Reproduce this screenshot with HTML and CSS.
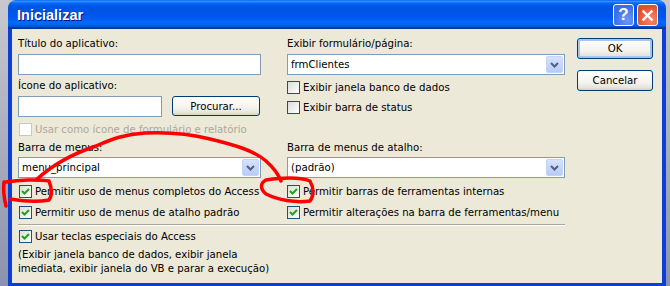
FILE: index.html
```html
<!DOCTYPE html>
<html>
    <head>
        <link rel="stylesheet" href="styles.css">
    </head>
    <body>
        <div class="screen">
            <div class="window">
                <div class="titlebar">
                    <span class="title">Inicializar</span>
                    <span class="tb help">?</span>
                    <span class="tb close">
                        <svg width="13" height="13" viewBox="0 0 13 13"><path d="M2.5 2.5 L10.5 10.5 M10.5 2.5 L2.5 10.5" stroke="#fff" stroke-width="2.4" stroke-linecap="square"/></svg>
                    </span>
                </div>
                <div class="client">
                    <div class="main">
                        <div class="upper">
                            <div class="col col-left">
                                <div class="label">Título do aplicativo:</div>
                                <div class="textbox"></div>
                                <div class="label gap3">Ícone do aplicativo:</div>
                                <div class="icon-row">
                                    <div class="textbox short"></div>
                                    <button class="xp-btn browse">Procurar...</button>
                                </div>
                                <div class="check-row disabled first-check">
                                    <span class="box"></span>Usar como ícone de formulário e relatório
                                </div>
                                <div class="label gap3">Barra de menus:</div>
                                <div class="combo">
                                    <span class="combo-text">menu_principal</span>
                                    <span class="drop"><svg width="9" height="6" viewBox="0 0 9 6"><path d="M1 1 L4.5 4.5 L8 1" fill="none" stroke="#4d6185" stroke-width="2"/></svg></span>
                                </div>
                                <div class="check-row checked">
                                    <span class="box"><svg width="11" height="11" viewBox="0 0 11 11"><path d="M2 5 L4.5 7.5 L9 3" fill="none" stroke="#21a121" stroke-width="2"/></svg></span>Permitir uso de menus completos do Access
                                </div>
                                <div class="check-row checked">
                                    <span class="box"><svg width="11" height="11" viewBox="0 0 11 11"><path d="M2 5 L4.5 7.5 L9 3" fill="none" stroke="#21a121" stroke-width="2"/></svg></span>Permitir uso de menus de atalho padrão
                                </div>
                            </div>
                            <div class="col col-right">
                                <div class="label">Exibir formulário/página:</div>
                                <div class="combo first-combo">
                                    <span class="combo-text">frmClientes</span>
                                    <span class="drop"><svg width="9" height="6" viewBox="0 0 9 6"><path d="M1 1 L4.5 4.5 L8 1" fill="none" stroke="#4d6185" stroke-width="2"/></svg></span>
                                </div>
                                <div class="check-row near">
                                    <span class="box"></span>Exibir janela banco de dados
                                </div>
                                <div class="check-row near">
                                    <span class="box"></span>Exibir barra de status
                                </div>
                                <div class="label spacer">Barra de menus de atalho:</div>
                                <div class="combo">
                                    <span class="combo-text">(padrão)</span>
                                    <span class="drop"><svg width="9" height="6" viewBox="0 0 9 6"><path d="M1 1 L4.5 4.5 L8 1" fill="none" stroke="#4d6185" stroke-width="2"/></svg></span>
                                </div>
                                <div class="check-row checked">
                                    <span class="box"><svg width="11" height="11" viewBox="0 0 11 11"><path d="M2 5 L4.5 7.5 L9 3" fill="none" stroke="#21a121" stroke-width="2"/></svg></span>Permitir barras de ferramentas internas
                                </div>
                                <div class="check-row checked">
                                    <span class="box"><svg width="11" height="11" viewBox="0 0 11 11"><path d="M2 5 L4.5 7.5 L9 3" fill="none" stroke="#21a121" stroke-width="2"/></svg></span>Permitir alterações na barra de ferramentas/menu
                                </div>
                            </div>
                        </div>
                        <div class="separator"></div>
                        <div class="lower">
                            <div class="check-row checked">
                                <span class="box"><svg width="11" height="11" viewBox="0 0 11 11"><path d="M2 5 L4.5 7.5 L9 3" fill="none" stroke="#21a121" stroke-width="2"/></svg></span>Usar teclas especiais do Access
                            </div>
                            <p class="note">(Exibir janela banco de dados, exibir janela<br>imediata, exibir janela do VB e parar a execução)</p>
                        </div>
                    </div>
                    <div class="actions">
                        <button class="xp-btn default">OK</button>
                        <button class="xp-btn">Cancelar</button>
                    </div>
                </div>
            </div>
            <!-- red marker scribbles drawn over the dialog -->
            <svg class="scribble" width="670" height="286" viewBox="0 0 670 286">
                <g fill="none" stroke="#f00" stroke-width="3.5" stroke-linecap="round" stroke-linejoin="round">
                    <path d="M36 180 C50 167 72 154 96 146 C112 139 125 134 145 133 C165 132 190 134 210 139 C235 145 255 151 266 161 C275 169 279 176 281 181"/>
                    <path d="M266 180 C280 178 300 177 310 181 C314 188 314 196 310 201 C295 203 278 200 266 194 C260 189 260 183 266 180"/>
                    <path d="M6 182 C18 180 38 179 49 181 C52 188 52 196 49 200 C38 202 22 201 10 199"/>
                    <path d="M4 182 C3 190 4 198 6 206"/>
                </g>
            </svg>
        </div>
    </body>
</html>
```

FILE: styles.css
```css
*{
    box-sizing: border-box;
}

body{
    margin: 0;
    font-family: "DejaVu Sans Condensed", "Liberation Sans", sans-serif;
    font-size: 11.3px;
    color: #000;
}

.screen{
    position: relative;
    width: 670px;
    height: 286px;
    display: flex;
    overflow: hidden;
    background: linear-gradient(#c8c9cf, #8b92ac);
}

.window{
    margin-left: 8px;
    width: 658px;
    display: flex;
    flex-direction: column;
    border-radius: 8px 8px 0 0;
    overflow: hidden;
}

.titlebar{
    height: 29px;
    flex: none;
    display: flex;
    align-items: center;
    gap: 3px;
    padding: 1px 8px 0 9px;
    background: linear-gradient(#0058ee 0%, #3593ff 4%, #288eff 6%, #127dff 8%, #036ffc 10%, #0262ee 14%, #0057e5 20%, #0054e3 24%, #0055eb 56%, #005bf5 66%, #026afe 76%, #0062ef 86%, #0052d6 92%, #0040ab 94%, #003092 100%);
}

.title{
    flex: 1;
    color: #fff;
    font: bold 14.5px "Liberation Sans", sans-serif;
    text-shadow: 1px 1px #0f1089;
}

.tb{
    width: 21px;
    height: 22px;
    border: 1px solid #fff;
    border-radius: 3px;
    display: flex;
    align-items: center;
    justify-content: center;
    color: #fff;
}

.help{
    background: radial-gradient(circle at 70% 75%, #6c98f6, #3a6ce6 70%);
    font: bold 17px "Liberation Sans", sans-serif;
}

.close{
    background: radial-gradient(circle at 70% 75%, #f08b6c, #d9542b 70%);
}

.client{
    flex: 1;
    display: flex;
    padding: 7px 0 0 6px;
    background: #ece9d8;
    border: solid #0b3fd6;
    border-width: 0 4px 3px 4px;
}

.main{
    width: 547px;
}

.upper{
    display: flex;
    gap: 26px;
}

.col{
    display: flex;
    flex-direction: column;
}

.col-left{
    width: 243px;
}

.col-right{
    width: 278px;
}

.label{
    height: 16px;
    line-height: 16px;
    white-space: nowrap;
}

.gap3{
    margin-top: 3px;
}

.spacer{
    margin-top: 25px;
}

.textbox{
    height: 21px;
    margin-top: 2px;
    background: #fff;
    border: 1px solid #7f9db9;
}

.icon-row{
    display: flex;
    align-items: flex-start;
    margin-top: 2px;
}

.icon-row .textbox{
    margin-top: 0;
}

.short{
    width: 144px;
}

.xp-btn{
    font-family: inherit;
    font-size: 11.3px;
    color: #000;
    height: 21px;
    padding: 0;
    border: 1px solid #003c74;
    border-radius: 3px;
    background: linear-gradient(#ffffff, #f4f3ee 60%, #e6e3d8 88%, #d6d0c5);
}

.browse{
    width: 88px;
    height: 20px;
    margin-left: 10px;
}

.combo{
    height: 21px;
    margin-top: 1px;
    display: flex;
    align-items: center;
    background: #fff;
    border: 1px solid #7f9db9;
}

.combo.first-combo{
    margin-top: 2px;
}

.combo-text{
    flex: 1;
    padding-left: 3px;
}

.drop{
    width: 17px;
    height: 17px;
    margin-right: 1px;
    display: flex;
    align-items: center;
    justify-content: center;
    border: 1px solid #c4d3f7;
    border-radius: 2px;
    background: linear-gradient(#d6e2fd, #b7cbf7);
}

.check-row{
    height: 16px;
    display: flex;
    align-items: center;
    gap: 3px;
    margin-top: 5px;
    white-space: nowrap;
}

.col-left .check-row, .lower .check-row{
    padding-left: 1px;
}

.check-row.first-check{
    margin-top: 4px;
}

.check-row.near{
    margin-top: 4px;
}

.box{
    width: 13px;
    height: 13px;
    flex: none;
    display: flex;
    align-items: center;
    justify-content: center;
    border: 1px solid #1c5180;
    background: linear-gradient(135deg, #dcdcd7, #fff);
}

.disabled{
    color: #aca899;
}

.disabled .box{
    border-color: #cac8bb;
    background: #fff;
}

.separator{
    height: 2px;
    margin-top: 4px;
    border-top: 1px solid #aca899;
    border-bottom: 1px solid #fff;
}

.lower .check-row{
    margin-top: 2px;
}

.note{
    margin: 4px 0 0;
    line-height: 14px;
}

.actions{
    margin-left: 12px;
    margin-top: 2px;
    width: 76px;
    display: flex;
    flex-direction: column;
    gap: 11px;
}

.default{
    box-shadow: inset 0 0 0 2px #a9c2f2;
}

.scribble{
    position: absolute;
    left: 0;
    top: 0;
    pointer-events: none;
}
```
